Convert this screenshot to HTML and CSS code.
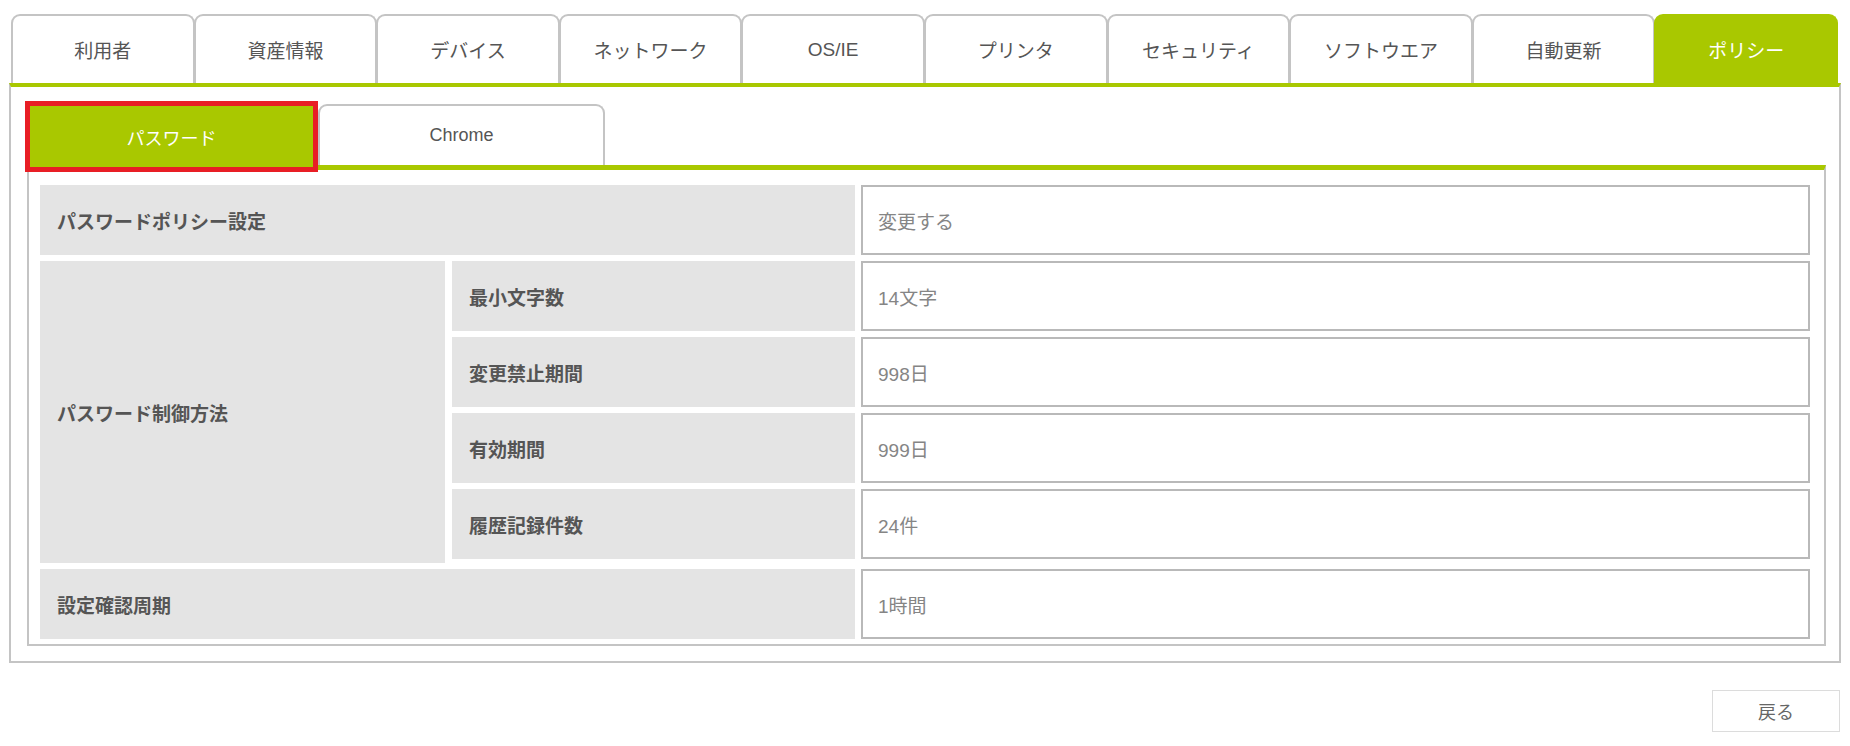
FILE: index.html
```html
<!DOCTYPE html>
<html lang="ja">
<head>
  <meta charset="UTF-8" />
  <meta name="viewport" content="width=device-width, initial-scale=1.0"/>
  <title>ポリシー</title>
  <link rel="stylesheet" href="styles.css">
</head>
<body>
  <div class="page">
    <div class="main-tabs">
      <div class="tab">利用者</div>
      <div class="tab">資産情報</div>
      <div class="tab">デバイス</div>
      <div class="tab">ネットワーク</div>
      <div class="tab">OS/IE</div>
      <div class="tab">プリンタ</div>
      <div class="tab">セキュリティ</div>
      <div class="tab">ソフトウエア</div>
      <div class="tab">自動更新</div>
      <div class="tab active">ポリシー</div>
    </div>

    <div class="panel">
      <div class="sub-tabs">
        <div class="sub-tab active">パスワード</div>
        <div class="sub-tab">Chrome</div>
      </div>

      <div class="sub-panel">
        <div class="policy-grid">
          <div class="label wide">パスワードポリシー設定</div>
          <div class="value">変更する</div>

          <div class="label group">パスワード制御方法</div>
          <div class="label">最小文字数</div>
          <div class="value">14文字</div>
          <div class="label">変更禁止期間</div>
          <div class="value">998日</div>
          <div class="label">有効期間</div>
          <div class="value">999日</div>
          <div class="label">履歴記録件数</div>
          <div class="value">24件</div>

          <div class="label wide last">設定確認周期</div>
          <div class="value last">1時間</div>
        </div>
      </div>
    </div>

    <div class="actions">
      <button class="back-btn">戻る</button>
    </div>
  </div>
</body>
</html>
```

FILE: styles.css
```css
:root {
  --green: #a9c800;
  --tab-border: #c4c4c4;
  --cell-bg: #e4e4e4;
  --label-text: #555555;
  --value-text: #858585;
}

* {
  margin: 0;
  padding: 0;
  box-sizing: border-box;
}

html, body {
  background: #fff;
  font-family: "Liberation Sans", "Noto Sans CJK JP", sans-serif;
  font-size: 19px;
  color: var(--label-text);
}

.page {
  padding: 14px 9px 0 9px;
}

/* top tabs */
.main-tabs {
  display: flex;
  padding: 0 3px 0 2px;
}

.tab {
  flex: 1;
  height: 69px;
  display: flex;
  align-items: center;
  justify-content: center;
  border: 2px solid var(--tab-border);
  border-bottom: none;
  border-radius: 9px 9px 0 0;
  background: #fff;
  color: var(--label-text);
}

.tab + .tab {
  margin-left: -1px;
}

.tab.active {
  background: var(--green);
  border-color: var(--green);
  color: #fff;
}

.panel {
  border: 2px solid var(--tab-border);
  border-top: 4px solid var(--green);
  padding: 14px 13px 15px 16px;
}

/* sub tabs */
.sub-tabs {
  display: flex;
  align-items: flex-end;
}

.sub-tab {
  width: 287px;
  height: 61px;
  display: flex;
  align-items: center;
  justify-content: center;
  border: 2px solid var(--tab-border);
  border-bottom: none;
  border-radius: 9px 9px 0 0;
  font-size: 18px;
  color: var(--label-text);
}

.sub-tab.active {
  position: relative;
  z-index: 1;
  width: 293px;
  height: 71px;
  margin: 0 0 -7px -2px;
  border: 5px solid #e81e25;
  border-radius: 0;
  background: var(--green);
  color: #fff;
}

.sub-panel {
  border: 2px solid var(--tab-border);
  border-top: 5px solid var(--green);
  padding: 15px 14px 5px 11px;
}

/* table */
.policy-grid {
  display: grid;
  grid-template-columns: 405px 403px 1fr;
  grid-template-rows: repeat(5, 70px) 74px;
  column-gap: 7px;
  row-gap: 6px;
}

.label {
  background: var(--cell-bg);
  font-weight: bold;
  color: var(--label-text);
  display: flex;
  align-items: center;
  padding-left: 17px;
}

.label.wide {
  grid-column: 1 / 3;
}

.label.group {
  grid-row: 2 / 6;
  grid-column: 1;
  margin-bottom: -4px;
}

.value {
  display: flex;
  align-items: center;
  padding-left: 15px;
  border: 2px solid #b9b9b9;
  margin-left: -1px;
  color: var(--value-text);
}

.last {
  margin-top: 4px;
}

.actions {
  display: flex;
  justify-content: flex-end;
  padding: 27px 1px 0 0;
}

.back-btn {
  width: 128px;
  height: 42px;
  background: #fff;
  border: 1px solid #dcdcdc;
  box-shadow: 0 2px 0 #cfcfcf;
  font-family: "Liberation Sans", "Noto Sans CJK JP", sans-serif;
  font-size: 18px;
  color: #666;
  cursor: pointer;
}
```
